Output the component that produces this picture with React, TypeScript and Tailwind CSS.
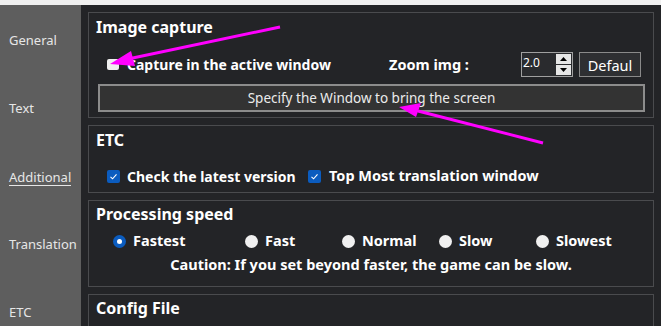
import React from "react";

const font = { fontFamily: '"Noto Sans", "Open Sans", sans-serif' };

function BlueCheck() {
  return (
    <span className="flex h-[13px] w-[13px] shrink-0 items-center justify-center rounded-[2px] bg-[#0b5cbf]">
      <svg width="9" height="9" viewBox="0 0 9 9">
        <path d="M1.5 4.8 L3.6 6.8 L7.5 2.3" fill="none" stroke="#ffffff" strokeWidth="1.1" />
      </svg>
    </span>
  );
}

function Radio({ on }: { on?: boolean }) {
  return on ? (
    <span className="flex h-[13px] w-[13px] shrink-0 items-center justify-center rounded-full bg-[#0b5cbf]">
      <span className="h-[5px] w-[5px] rounded-full bg-white" />
    </span>
  ) : (
    <span className="h-[13px] w-[13px] shrink-0 rounded-full bg-[#f0f0f0]" />
  );
}

function RadioItem({ label, on, w }: { label: string; on?: boolean; w: string }) {
  return (
    <div className={`flex shrink-0 items-center gap-[7px] ${w}`}>
      <Radio on={on} />
      <span className="text-[14.5px] font-bold text-white">{label}</span>
    </div>
  );
}

export default function App() {
  return (
    <div className="relative h-[326px] w-[661px] overflow-hidden bg-[#232427]" style={font}>
      <div className="h-[5px] bg-[#f0f0f0]" />
      <div className="flex h-[321px]">
        <div className="flex w-[81px] shrink-0 flex-col bg-[#5e5e5e] pt-[2px] text-[13px] text-[#e6e6e6]">
          <div className="flex h-[68px] shrink-0 items-center pl-[9px]">General</div>
          <div className="flex h-[68px] shrink-0 items-center pl-[9px]">Text</div>
          <div className="flex h-[68px] shrink-0 items-center pl-[9px]">
            <span className="border-b border-[#e6e6e6] leading-[16px]">Additional</span>
          </div>
          <div className="flex h-[68px] shrink-0 items-center pl-[9px]">Translation</div>
          <div className="flex h-[68px] shrink-0 items-center pl-[9px]">ETC</div>
        </div>
        <div className="flex flex-1 flex-col gap-[7px] pl-[7px] pr-[7px] pt-[7px]">
          {/* Image capture */}
          <div className="flex h-[106px] shrink-0 flex-col border border-[#4a4b4e]">
            <div className="flex h-[28px] shrink-0 items-center pl-[7px] text-[16px] font-bold text-white">Image capture</div>
            <div className="mt-[11px] flex h-[25px] shrink-0 items-center">
              <span className="ml-[18px] h-[11px] w-[12px] shrink-0 rounded-[2px] bg-[#f0f0f0]" />
              <span className="ml-[8px] w-[262px] shrink-0 text-[14px] font-bold text-white">Capture in the active window</span>
              <span className="w-[132px] shrink-0 text-[14.5px] font-bold text-white">Zoom img :</span>
              <div className="flex h-[25px] w-[52px] shrink-0 items-center border border-[#a0a0a0] bg-[#2a2b2e]">
                <span className="flex-1 pb-[3px] pl-[1px] text-[12px] text-white">2.0</span>
                <div className="mr-[1px] flex h-[21px] w-[15px] flex-col gap-[1px]">
                  <div className="flex flex-1 items-center justify-center bg-[#e6e6e6]">
                    <svg width="7" height="4" viewBox="0 0 7 4"><path d="M0 4 L3.5 0 L7 4 Z" fill="#000" /></svg>
                  </div>
                  <div className="flex flex-1 items-center justify-center bg-[#e6e6e6]">
                    <svg width="7" height="4" viewBox="0 0 7 4"><path d="M0 0 L3.5 4 L7 0 Z" fill="#000" /></svg>
                  </div>
                </div>
              </div>
              <div className="ml-[6px] flex h-[25px] w-[62px] shrink-0 items-center justify-center border border-[#8a8a8a] bg-[#2e2f32] pt-[2px] text-[14.5px] text-white">
                Defaul
              </div>
            </div>
            <div className="ml-[9px] mr-[8px] mt-[7px] flex h-[28px] shrink-0 items-center justify-center border-2 border-[#8c8c8c] bg-[#333333] text-[13.5px] text-[#ececec]">
              Specify the Window to bring the screen
            </div>
          </div>
          {/* ETC */}
          <div className="flex h-[68px] shrink-0 flex-col border border-[#4a4b4e]">
            <div className="flex h-[27px] shrink-0 items-center pl-[7px] text-[16px] font-bold text-white">ETC</div>
            <div className="mt-[11px] flex h-[24px] shrink-0 items-center pl-[18px]">
              <BlueCheck />
              <span className="ml-[7px] w-[181px] shrink-0 text-[14px] font-bold text-white">Check the latest version</span>
              <BlueCheck />
              <span className="ml-[8px] text-[14.5px] font-bold text-white">Top Most translation window</span>
            </div>
          </div>
          {/* Processing speed */}
          <div className="flex h-[87px] shrink-0 flex-col border border-[#4a4b4e]">
            <div className="flex h-[26px] shrink-0 items-center pl-[7px] text-[16px] font-bold text-white">Processing speed</div>
            <div className="mt-[3px] flex h-[22px] shrink-0 items-center pl-[24px]">
              <RadioItem label="Fastest" on w="w-[132px]" />
              <RadioItem label="Fast" w="w-[97px]" />
              <RadioItem label="Normal" w="w-[97px]" />
              <RadioItem label="Slow" w="w-[97px]" />
              <RadioItem label="Slowest" w="w-[97px]" />
            </div>
            <div className="flex h-[26px] shrink-0 items-center justify-center text-[14.5px] font-bold text-white">
              Caution: If you set beyond faster, the game can be slow.
            </div>
          </div>
          {/* Config File */}
          <div className="flex h-[60px] shrink-0 flex-col border border-[#4a4b4e]">
            <div className="flex h-[26px] shrink-0 items-center pl-[7px] text-[16px] font-bold text-white">Config File</div>
          </div>
        </div>
      </div>
      <svg className="pointer-events-none absolute left-0 top-0" width="661" height="326">
        <line x1="280" y1="27" x2="128" y2="59" stroke="#ff00ff" strokeWidth="3" />
        <path d="M110 64 L131 51 L135 66 Z" fill="#ff00ff" />
        <line x1="543" y1="143" x2="418" y2="111" stroke="#ff00ff" strokeWidth="3" />
        <path d="M399 107 L421 103 L416 117 Z" fill="#ff00ff" />
      </svg>
    </div>
  );
}
